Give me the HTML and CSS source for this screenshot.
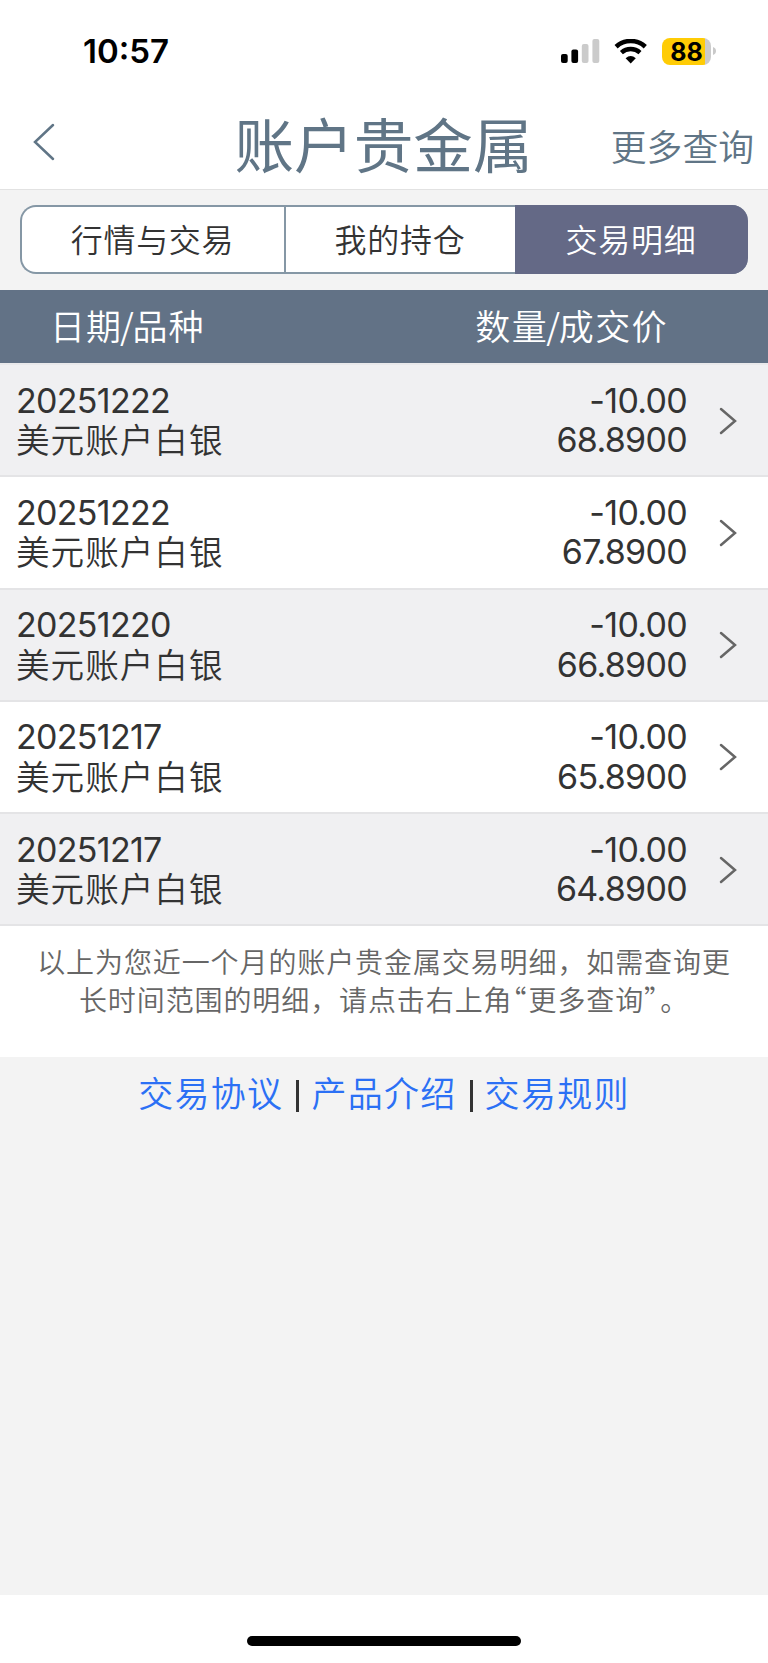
FILE: index.html
```html
<!DOCTYPE html>
<html lang="zh-CN">
<head>
<meta charset="utf-8">
<title>账户贵金属</title>
<link rel="stylesheet" href="styles.css">
</head>
<body>
<div class="status">
  <span class="clock">10:57</span>
  <div class="indicators">
    <svg class="signal" viewBox="0 0 39 24" width="39" height="24">
      <rect x="0" y="15" width="6.7" height="9" rx="2"/>
      <rect x="10.4" y="10.4" width="6.7" height="13.6" rx="2"/>
      <rect class="dim" x="20.8" y="5" width="6.7" height="19" rx="2"/>
      <rect class="dim" x="31.4" y="0" width="6.9" height="24" rx="2"/>
    </svg>
    <svg class="wifi" viewBox="0 0 34 25" width="34" height="25">
      <path d="M2.1 7.7A21.6 21.6 0 0 1 31.3 7.7" fill="none" stroke="#000" stroke-width="4.6"/>
      <path d="M7.4 13.6A13.8 13.8 0 0 1 26 13.6" fill="none" stroke="#000" stroke-width="4.4"/>
      <path d="M11.6 19.3Q16.7 14.6 21.8 19.3L16.7 24.6Z"/>
    </svg>
    <div class="battery"><span class="level">88</span></div>
    <svg class="cap" viewBox="0 0 3 8" width="3" height="8"><path d="M0 0Q3 1.2 3 4T0 8Z" fill="#c9c9c9"/></svg>
  </div>
</div>
<header class="nav">
  <svg class="back" viewBox="0 0 22 38" width="22" height="38"><path d="M20 2 2 19 20 36"/></svg>
  <h1 class="title">账户贵金属</h1>
  <a class="more">更多查询</a>
</header>
<main class="page">
  <nav class="tabs">
    <a class="tab tab-quote">行情与交易</a>
    <a class="tab tab-hold">我的持仓</a>
    <a class="tab tab-active">交易明细</a>
  </nav>
  <div class="thead"><span class="th-date">日期<span class="slash">/</span>品种</span><span>数量<span class="slash">/</span>成交价</span></div>
  <ul class="rows">
    <li class="row"><div class="cell"><span class="num">20251222</span><span class="name">美元账户白银</span></div><div class="cell right"><span class="num">-10.00</span><span class="num">68.8900</span></div><svg class="chev" viewBox="0 0 18 28" width="18" height="28"><path d="M2 2 16 14 2 26"/></svg></li>
    <li class="row"><div class="cell"><span class="num">20251222</span><span class="name">美元账户白银</span></div><div class="cell right"><span class="num">-10.00</span><span class="num">67.8900</span></div><svg class="chev" viewBox="0 0 18 28" width="18" height="28"><path d="M2 2 16 14 2 26"/></svg></li>
    <li class="row"><div class="cell"><span class="num">20251220</span><span class="name">美元账户白银</span></div><div class="cell right"><span class="num">-10.00</span><span class="num">66.8900</span></div><svg class="chev" viewBox="0 0 18 28" width="18" height="28"><path d="M2 2 16 14 2 26"/></svg></li>
    <li class="row"><div class="cell"><span class="num">20251217</span><span class="name">美元账户白银</span></div><div class="cell right"><span class="num">-10.00</span><span class="num">65.8900</span></div><svg class="chev" viewBox="0 0 18 28" width="18" height="28"><path d="M2 2 16 14 2 26"/></svg></li>
    <li class="row"><div class="cell"><span class="num">20251217</span><span class="name">美元账户白银</span></div><div class="cell right"><span class="num">-10.00</span><span class="num">64.8900</span></div><svg class="chev" viewBox="0 0 18 28" width="18" height="28"><path d="M2 2 16 14 2 26"/></svg></li>
  </ul>
  <p class="note">以上为您近一个月的账户贵金属交易明细，如需查询更<br>长时间范围的明细，请点击右上角<span class="quote">“</span>更多查询<span class="quote">”</span>。</p>
  <div class="links"><a>交易协议</a><i class="bar"></i><a>产品介绍</a><i class="bar"></i><a>交易规则</a></div>
</main>
<footer class="home"><div class="pill"></div></footer>
</body>
</html>
```
FILE: styles.css
```css
* { box-sizing: border-box; }
body {
  margin: 0;
  width: 768px;
  height: 1663px;
  display: flex;
  flex-direction: column;
  background: #fff;
  color: #333;
  font-family: "Noto Sans CJK SC", sans-serif;
  font-weight: 350;
  text-spacing-trim: space-all;
  overflow: hidden;
}
.status {
  height: 102px;
  padding: 0 52px 0 83px;
  display: flex;
  align-items: center;
  justify-content: space-between;
  color: #000;
}
.clock {
  font: 600 33px/40px Inter, sans-serif;
}
.indicators { display: flex; align-items: center; }
.signal .dim { fill: #cbcbcb; }
.wifi { margin-left: 14px; }
.battery {
  width: 49px;
  height: 27px;
  margin-left: 14px;
  border-radius: 8px;
  background: linear-gradient(90deg, #ffcc05 43px, #cbcbcb 43px);
}
.level {
  display: block;
  width: 49px;
  text-align: center;
  font: 700 25px/28px Inter, sans-serif;
}
.cap { margin-left: 2px; }
.nav {
  height: 88px;
  display: grid;
  grid-template-columns: 200px 1fr 200px;
  border-bottom: 1px solid #e2e2e2;
  color: #607586;
}
.back {
  margin: 21px 0 0 32.5px;
  fill: none;
  stroke: #607586;
  stroke-width: 2.5;
  stroke-linecap: round;
}
.title {
  margin: 0 0 0 -1px;
  text-align: center;
  white-space: nowrap;
  font-weight: 400;
  font-size: 59.6px;
  line-height: 81px;
}
.more {
  padding: 0 14px 0 0;
  text-align: right;
  font-size: 35.8px;
  line-height: 87px;
}
.page { flex: 1; background: #f3f3f3; }
.tabs {
  height: 69px;
  margin: 15px 20px 16px;
  display: grid;
  grid-template-columns: 264px 229px 1fr;
  border: 2px solid #8597a5;
  border-right: 0;
  border-radius: 16px;
  background: #fff;
}
.tab {
  padding-right: 1px;
  text-align: center;
  font-size: 32px;
  letter-spacing: .7px;
  line-height: 63px;
}
.tab-quote { border-right: 2px solid #8597a5; }
.tab-active {
  margin: -2px 0;
  padding-top: 2px;
  border-radius: 0 16px 16px 0;
  background: #646986;
  color: #fff;
}
.thead {
  height: 73px;
  padding: 0 100px 0 50px;
  display: flex;
  justify-content: space-between;
  background: #627286;
  color: #fff;
  font-size: 35px;
  letter-spacing: 1.4px;
  line-height: 69px;
}
.th-date { letter-spacing: .9px; }
.slash { letter-spacing: -1.2px; margin-left: -1.8px; }
.rows { margin: 0; padding: 0; list-style: none; border-top: 2px solid #e9e9eb; }
.row {
  height: 112.25px;
  padding: 15.5px 31px 0 16px;
  display: flex;
  background: #fff;
  border-bottom: 2px solid #e4e4e6;
}
.row:nth-child(odd) { background: #f0f0f2; }
.cell { display: flex; flex-direction: column; }
.right { margin-left: auto; align-items: flex-end; }
.num {
  font: 400 34px/39.5px Inter, sans-serif;
  letter-spacing: -.7px;
}
.name {
  font-size: 33.6px;
  letter-spacing: 1px;
  line-height: 38px;
}
.chev {
  margin: 26px 0 0 32px;
  fill: none;
  stroke: #666;
  stroke-width: 2.5;
  stroke-linecap: round;
}
.note {
  height: 131px;
  margin: 0;
  padding-top: 17px;
  background: #fff;
  color: #666;
  text-align: center;
  white-space: nowrap;
  font-size: 28px;
  letter-spacing: .9px;
  line-height: 37.3px;
}
.quote { font-feature-settings: "halt"; letter-spacing: 2px; }
.links {
  padding-top: 9px;
  display: flex;
  justify-content: center;
  align-items: center;
  color: #2b70f5;
  font-size: 35px;
  letter-spacing: 1.3px;
  line-height: 52px;
}
.bar { width: 3px; height: 32px; margin: 8px 12px 0 13px; background: #333; }
.home {
  height: 68px;
  padding-top: 41px;
  background: #fff;
}
.pill {
  width: 274px;
  height: 10px;
  margin: 0 auto;
  border-radius: 5px;
  background: #000;
}
```
